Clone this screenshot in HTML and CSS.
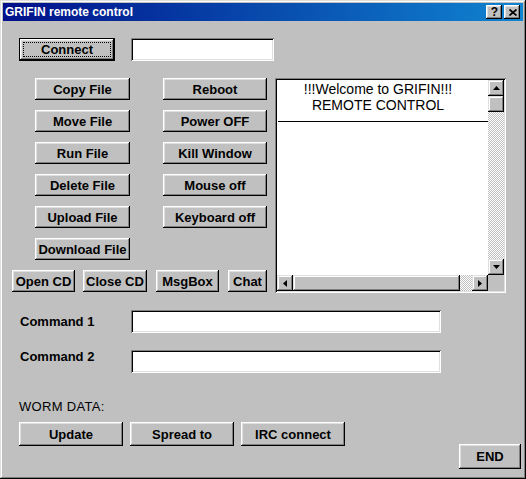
FILE: index.html
```html
<!DOCTYPE html>
<html>
<head>
<meta charset="utf-8">
<title>GRIFIN remote control</title>
<link rel="stylesheet" href="styles.css">
</head>
<body>
<div class="window">
  <div class="titlebar">
    <span class="title">GRIFIN remote control</span>
    <div class="tb-buttons">
      <div class="tb-btn tb-help">?</div>
      <div class="tb-btn tb-close">
        <svg width="8" height="7" viewBox="0 0 8 7"><path d="M0.5 0.5 L7.5 6.5 M7.5 0.5 L0.5 6.5" stroke="#000" stroke-width="1.7" fill="none"/></svg>
      </div>
    </div>
  </div>
  <div class="client">
    <div class="connect-row">
      <button class="btn btn-default connect">Connect</button>
      <div class="field connect-field"></div>
    </div>
    <div class="main">
      <div class="controls">
        <div class="grid">
          <button class="btn">Copy File</button>
          <button class="btn">Reboot</button>
          <button class="btn">Move File</button>
          <button class="btn">Power OFF</button>
          <button class="btn">Run File</button>
          <button class="btn">Kill Window</button>
          <button class="btn">Delete File</button>
          <button class="btn">Mouse off</button>
          <button class="btn">Upload File</button>
          <button class="btn">Keyboard off</button>
          <button class="btn">Download File</button>
        </div>
        <div class="bottom-row">
          <button class="btn w-open">Open CD</button>
          <button class="btn w-close">Close CD</button>
          <button class="btn w-msg">MsgBox</button>
          <button class="btn w-chat">Chat</button>
        </div>
      </div>
      <div class="log">
        <div class="log-text">
          <div class="log-lines">!!!Welcome to GRIFIN!!!<br>REMOTE CONTROL</div>
          <div class="log-rule"></div>
        </div>
        <div class="vscroll">
          <div class="sb-btn"><svg width="7" height="4" viewBox="0 0 7 4"><polygon points="3.5,0 7,4 0,4" fill="#000"/></svg></div>
          <div class="sb-thumb-v"></div>
          <div class="sb-track"></div>
          <div class="sb-btn"><svg width="7" height="4" viewBox="0 0 7 4"><polygon points="0,0 7,0 3.5,4" fill="#000"/></svg></div>
        </div>
        <div class="hscroll">
          <div class="sb-btn"><svg width="4" height="7" viewBox="0 0 4 7"><polygon points="4,0 4,7 0,3.5" fill="#000"/></svg></div>
          <div class="sb-thumb-h"></div>
          <div class="sb-track"></div>
          <div class="sb-btn"><svg width="4" height="7" viewBox="0 0 4 7"><polygon points="0,0 4,3.5 0,7" fill="#000"/></svg></div>
        </div>
        <div class="corner"></div>
      </div>
    </div>
    <div class="cmd-row">
      <span class="cmd-label cmd1">Command 1</span>
      <div class="field cmd-field"></div>
    </div>
    <div class="cmd-row">
      <span class="cmd-label cmd2">Command 2</span>
      <div class="field cmd-field"></div>
    </div>
    <div class="worm-label">WORM DATA:</div>
    <div class="worm-row">
      <button class="btn worm-btn">Update</button>
      <button class="btn worm-btn">Spread to</button>
      <button class="btn worm-btn">IRC connect</button>
      <button class="btn end-btn">END</button>
    </div>
  </div>
</div>
</body>
</html>
```
FILE: styles.css
```css
* { box-sizing: border-box; }
html, body { margin: 0; padding: 0; }
body {
  background: #c0c0c0;
  font-family: "Liberation Sans", Arial, sans-serif;
  color: #000;
}
.window {
  width: 526px;
  height: 479px;
  background: #c0c0c0;
  padding: 3px;
  display: flex;
  flex-direction: column;
  box-shadow: inset -1px -1px #000, inset 1px 1px #dfdfdf, inset -2px -2px #808080, inset 2px 2px #fff;
}
.titlebar {
  height: 18px;
  flex: none;
  background: linear-gradient(90deg, #00108a, #1084d0);
  display: flex;
  align-items: center;
  justify-content: space-between;
  padding: 0 3px 0 2px;
}
.title {
  color: #fff;
  font-weight: bold;
  font-size: 12px;
  line-height: 14px;
}
.tb-buttons { display: flex; gap: 2px; }
.tb-btn {
  width: 16px;
  height: 14px;
  background: #c0c0c0;
  display: flex;
  align-items: center;
  justify-content: center;
  box-shadow: inset -1px -1px #000, inset 1px 1px #fff, inset -2px -2px #808080, inset 2px 2px #dfdfdf;
}
.tb-help {
  font-weight: bold;
  font-size: 12px;
  line-height: 12px;
  padding-left: 1px;
}
.tb-close svg { display: block; margin-left: 1px; }

.client { flex: 1; display: flex; flex-direction: column; }

.btn {
  background: #c0c0c0;
  border: none;
  margin: 0;
  padding: 0;
  font-family: "Liberation Sans", Arial, sans-serif;
  font-weight: bold;
  font-size: 13px;
  color: #000;
  white-space: nowrap;
  display: flex;
  align-items: center;
  justify-content: center;
  box-shadow: inset -1px -1px #000, inset 1px 1px #fff, inset -2px -2px #808080, inset 2px 2px #dfdfdf;
}
.btn-default {
  border: 1px solid #000;
  outline: 1px dotted #000;
  outline-offset: -5px;
}
.field {
  background: #fff;
  box-shadow: inset 1px 1px #808080, inset -1px -1px #fff, inset 2px 2px #000, inset -2px -2px #dfdfdf;
}

.connect-row {
  display: flex;
  gap: 16px;
  margin: 17px 0 0 16px;
}
.connect { width: 96px; height: 23px; }
.connect-field { width: 143px; height: 23px; }

.main {
  display: flex;
  gap: 8px;
  margin: 17px 0 0 9px;
}
.controls { display: flex; flex-direction: column; gap: 10px; }
.grid {
  margin-left: 23px;
  display: grid;
  grid-template-columns: 95px 104px;
  grid-auto-rows: 22px;
  column-gap: 33px;
  row-gap: 10px;
}
.bottom-row { display: flex; height: 22px; }
.bottom-row .btn { height: 22px; }
.w-open { width: 63px; }
.w-close { width: 64px; margin-left: 8px; }
.w-msg { width: 63px; margin-left: 9px; }
.w-chat { width: 39px; margin-left: 9px; }

.log {
  width: 231px;
  height: 215px;
  padding: 2px;
  background: #fff;
  display: grid;
  grid-template-columns: 211px 16px;
  grid-template-rows: 195px 16px;
  box-shadow: inset 1px 1px #808080, inset -1px -1px #fff, inset 2px 2px #000, inset -2px -2px #dfdfdf;
}
.log-text { background: #fff; padding-top: 1px; }
.log-lines {
  text-align: center;
  font-size: 14px;
  line-height: 16px;
  padding-right: 9px;
}
.log-rule {
  height: 1px;
  background: #000;
  margin: 8px 0 0 1px;
}
.vscroll { display: flex; flex-direction: column; }
.hscroll { display: flex; }
.sb-btn {
  width: 16px;
  height: 16px;
  flex: none;
  background: #c0c0c0;
  display: flex;
  align-items: center;
  justify-content: center;
  box-shadow: inset -1px -1px #000, inset 1px 1px #dfdfdf, inset -2px -2px #808080, inset 2px 2px #fff;
}
.sb-btn svg { display: block; }
.sb-thumb-v {
  width: 16px;
  height: 16px;
  flex: none;
  background: #c0c0c0;
  box-shadow: inset -1px -1px #000, inset 1px 1px #dfdfdf, inset -2px -2px #808080, inset 2px 2px #fff;
}
.sb-thumb-h {
  width: 167px;
  height: 16px;
  flex: none;
  background: #c0c0c0;
  box-shadow: inset -1px -1px #000, inset 1px 1px #dfdfdf, inset -2px -2px #808080, inset 2px 2px #fff;
}
.sb-track {
  flex: 1;
  background-image: repeating-conic-gradient(#c0c0c0 0 25%, #fff 0 50%);
  background-size: 2px 2px;
}
.corner { background: #c0c0c0; }

.cmd-row {
  display: flex;
  align-items: flex-start;
  margin: 17px 0 0 17px;
}
.cmd-label {
  width: 111px;
  font-weight: bold;
  font-size: 13px;
  line-height: 16px;
}
.cmd1 { margin-top: 4px; }
.cmd2 { margin-top: -1px; }
.cmd-field { width: 310px; height: 23px; }

.worm-label {
  margin: 26px 0 0 16px;
  font-size: 13px;
  line-height: 16px;
  letter-spacing: 0.3px;
}
.worm-row {
  display: flex;
  align-items: flex-start;
  margin: 7px 2px 0 16px;
}
.worm-btn { width: 104px; height: 24px; margin-right: 7px; }
.end-btn { width: 62px; height: 25px; margin: 22px 0 0 auto; }
```
